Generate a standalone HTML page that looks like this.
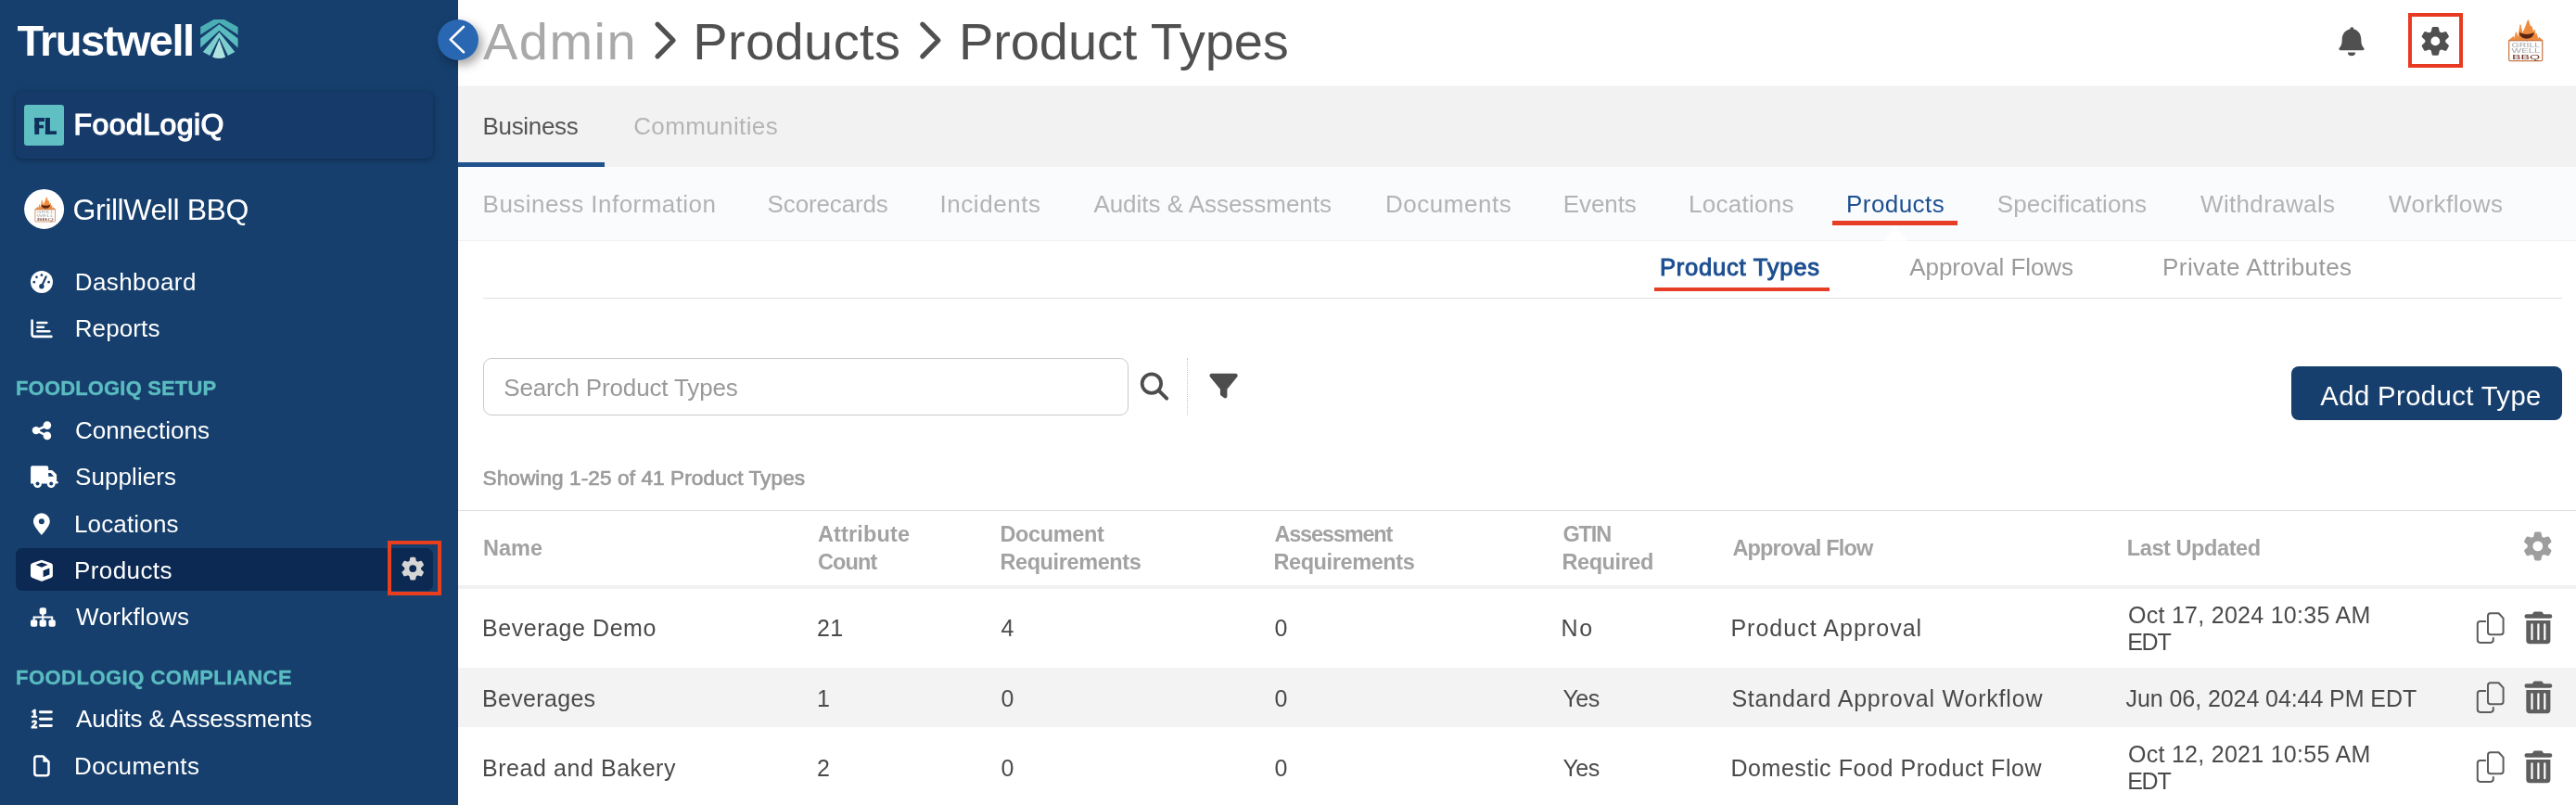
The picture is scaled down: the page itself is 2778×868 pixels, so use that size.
<!DOCTYPE html>
<html><head><meta charset="utf-8"><title>Product Types</title>
<style>
*{margin:0;padding:0;box-sizing:border-box}
html,body{width:2778px;height:868px;overflow:hidden;background:#fff}
body{font-family:"Liberation Sans",sans-serif;position:relative}
.a{position:absolute}
.t{position:absolute;white-space:nowrap;line-height:1}
svg{position:absolute;overflow:visible}
</style></head>
<body>

<!-- header bottom shadow + gray tab band -->
<div class="a" style="left:494px;top:93px;width:2284px;height:87px;background:#f2f2f2"></div>
<div class="a" style="left:494px;top:92px;width:2284px;height:2px;background:linear-gradient(#ffffff,#ececec)"></div>
<div class="a" style="left:494px;top:175px;width:158px;height:5px;background:#20528e"></div>
<!-- subnav band -->
<div class="a" style="left:494px;top:180px;width:2284px;height:80px;background:#fafbfd;border-bottom:1px solid #eef0f2"></div>

<svg style="left:0;top:0" width="2778" height="300" viewBox="0 0 2778 300"><path d="M2031.3 259.8 L2044 243.2 L2056.7 259.8Z" fill="#fff"/></svg>
<div class="a" style="left:1976px;top:238.4px;width:135px;height:4.2px;background:#e63e24"></div>
<!-- third level -->
<div class="a" style="left:1784px;top:310px;width:189px;height:4px;background:#e63e24"></div>
<div class="a" style="left:521px;top:321px;width:2242px;height:1px;background:#dedfe1"></div>
<!-- search -->
<div class="a" style="left:521px;top:386px;width:696px;height:62px;border:1px solid #c9c9c9;border-radius:9px;background:#fff"></div>
<div class="a" style="left:1280px;top:386px;width:0;height:62px;border-left:1px dotted #c4c4c4"></div>
<!-- add button -->
<div class="a" style="left:2471px;top:395px;width:292px;height:58px;border-radius:8px;background:#163f6d"></div>
<!-- table -->
<div class="a" style="left:494px;top:550px;width:2284px;height:1px;background:#dddddd"></div>
<div class="a" style="left:494px;top:631px;width:2284px;height:4px;background:#f1f1f1"></div>
<div class="a" style="left:494px;top:720px;width:2284px;height:64px;background:#f3f3f3"></div>
<!-- sidebar -->
<div class="a" style="left:0;top:0;width:494px;height:868px;background:#163f6d"></div>
<div class="a" style="left:17px;top:99px;width:450px;height:72px;border-radius:7px;background:#163b6b;box-shadow:0 1px 6px rgba(0,0,0,.38)"></div>
<div class="a" style="left:26px;top:113px;width:43px;height:44px;border-radius:3px;background:#60bfc2"></div>
<div class="a" style="left:17px;top:591px;width:450px;height:46px;border-radius:7px;background:#0b2952"></div>
<div class="a" style="left:418px;top:583px;width:58px;height:59px;border:4px solid #e8401f"></div>
<div class="a" style="left:2597px;top:14px;width:59px;height:59px;border:4px solid #e83a20"></div>
<!-- collapse circle -->
<div class="a" style="left:472px;top:20.5px;width:44px;height:44px;border-radius:50%;background:#2a67b2;box-shadow:4px 5px 11px rgba(0,0,0,.36)"></div>

<svg style="left:0;top:0;will-change:transform" width="2778" height="868" viewBox="0 0 2778 868">
<g><path d="M216.2 29.1 L230.6 21 L241.8 21 L256.6 29.1 L256.6 37.5 L236.4 24.6 L216.2 37.5Z" fill="#4aaeb3"/><path d="M216.2 41.5 L236.4 26.3 L256.6 41.5 L256.6 51.5 L236.4 33.1 L216.2 51.5Z" fill="#5bbcc0"/><path d="M218.8 56.1 L236.4 34.7 L253.3 56.1 L245.9 59.9 L236.4 40.6 L226.3 59.9Z" fill="#7ccdce"/><path d="M236.4 42.8 L243.1 61.4 Q236.4 64.6 229.1 61.4Z" fill="#b0e4e1"/></g>
<g fill="#0f2f5c"><rect x="37.3" y="127" width="4.9" height="17.9"/><rect x="37.3" y="127" width="10.6" height="4.1"/><rect x="37.3" y="134.8" width="9.7" height="3.5"/><rect x="48.9" y="127" width="5" height="17.9"/><rect x="48.9" y="141.3" width="12.1" height="3.6"/></g>
<path d="M500 28.8 L485.8 42.6 L500 56.3" fill="none" stroke="#fff" stroke-width="2.6" stroke-linecap="round" stroke-linejoin="round"/>
<circle cx="47.6" cy="225.4" r="21.5" fill="#fff"/>
<g transform="translate(37.5 212.9) scale(1.0)"><path d="M0.13 12.97 L3.41 10.41 L4.04 12.29 L4.97 7.55 L6.22 11.66 L7.78 2.86 L9.14 8.44 L10.49 5.83 L12.78 -0.26 L14.24 4.01 L15.07 3.91 L16.17 8.02 L16.95 5.99 L17.73 10.10 L18.20 8.59 L19.19 12.08 L19.97 10.93 L22.36 12.97Z" fill="#ee8a3c" stroke="#ee8a3c" stroke-width="0.5" stroke-linejoin="round"/><path d="M7.06 7.81 Q11.85 10.10 16.64 7.81 Q16.22 11.66 11.85 11.77 Q7.47 11.66 7.06 7.81Z" fill="#5a2415"/><path d="M12.11 11.87 L12.11 13.75" stroke="#9a9a9a" stroke-width="0.5"/><rect x="0.4" y="12.9" width="21.6" height="13.2" rx="0.7" fill="none" stroke="#c77a4a" stroke-width="0.75"/><rect x="0.8" y="13.3" width="20.8" height="12.4" fill="#fff" opacity="0"/><text x="2.1" y="17.5" font-family="Liberation Sans" font-size="3.9" textLength="18.4" lengthAdjust="spacingAndGlyphs" fill="#a3a3a3">GRILL</text><text x="2.1" y="21" font-family="Liberation Sans" font-size="3.9" textLength="18.4" lengthAdjust="spacingAndGlyphs" fill="#a3a3a3">WELL</text><text x="2.4" y="24.9" font-family="Liberation Sans" font-size="4.1" textLength="18" lengthAdjust="spacingAndGlyphs" fill="#6a2c1f">BBQ</text></g>
<g transform="translate(2705 22) scale(1.67)"><path d="M0.13 12.97 L3.41 10.41 L4.04 12.29 L4.97 7.55 L6.22 11.66 L7.78 2.86 L9.14 8.44 L10.49 5.83 L12.78 -0.26 L14.24 4.01 L15.07 3.91 L16.17 8.02 L16.95 5.99 L17.73 10.10 L18.20 8.59 L19.19 12.08 L19.97 10.93 L22.36 12.97Z" fill="#ee8a3c" stroke="#ee8a3c" stroke-width="0.5" stroke-linejoin="round"/><path d="M7.06 7.81 Q11.85 10.10 16.64 7.81 Q16.22 11.66 11.85 11.77 Q7.47 11.66 7.06 7.81Z" fill="#5a2415"/><path d="M12.11 11.87 L12.11 13.75" stroke="#9a9a9a" stroke-width="0.5"/><rect x="0.4" y="12.9" width="21.6" height="13.2" rx="0.7" fill="none" stroke="#c77a4a" stroke-width="0.75"/><rect x="0.8" y="13.3" width="20.8" height="12.4" fill="#fff" opacity="0"/><text x="2.1" y="17.5" font-family="Liberation Sans" font-size="3.9" textLength="18.4" lengthAdjust="spacingAndGlyphs" fill="#a3a3a3">GRILL</text><text x="2.1" y="21" font-family="Liberation Sans" font-size="3.9" textLength="18.4" lengthAdjust="spacingAndGlyphs" fill="#a3a3a3">WELL</text><text x="2.4" y="24.9" font-family="Liberation Sans" font-size="4.1" textLength="18" lengthAdjust="spacingAndGlyphs" fill="#6a2c1f">BBQ</text></g>
<circle cx="45" cy="304.1" r="12" fill="#fff"/>
<circle cx="36.8" cy="304.2" r="1.35" fill="#163f6d"/>
<circle cx="39.5" cy="298.8" r="1.35" fill="#163f6d"/>
<circle cx="44.9" cy="296.7" r="1.35" fill="#163f6d"/>
<circle cx="52.6" cy="304.2" r="1.35" fill="#163f6d"/>
<path d="M44.9 308.6 L49.7 298.4" stroke="#163f6d" stroke-width="2.2" stroke-linecap="round"/>
<circle cx="44.9" cy="308.7" r="2.7" fill="#163f6d"/>
<path d="M34.6 345.5 L34.6 360.4 Q34.6 362.9 37.1 362.9 L55.4 362.9" fill="none" stroke="#fff" stroke-width="2.6" stroke-linecap="round" stroke-linejoin="round"/>
<path d="M40.4 348.1 L50.3 348.1" stroke="#fff" stroke-width="2.5" stroke-linecap="round"/>
<path d="M40.4 352.7 L46.9 352.7" stroke="#fff" stroke-width="2.5" stroke-linecap="round"/>
<path d="M40.4 357.3 L53.3 357.3" stroke="#fff" stroke-width="2.5" stroke-linecap="round"/>
<path d="M50.8 458.7 L38.9 464.1 L50.8 469.8" fill="none" stroke="#fff" stroke-width="2.6" stroke-linejoin="round"/>
<circle cx="38.9" cy="464.1" r="4.2" fill="#fff"/><circle cx="50.9" cy="458.6" r="4.3" fill="#fff"/><circle cx="50.9" cy="469.9" r="4.3" fill="#fff"/>
<path d="M34.9 502.3 L50.4 502.3 Q52.2 502.3 52.2 504.1 L52.2 507 L55.8 507 Q56.4 507 56.8 507.4 L60.7 511.3 Q61.1 511.7 61.1 512.3 L61.1 518.9 L61.7 518.9 Q62.8 518.9 62.8 520.2 Q62.8 521.6 61.7 521.6 L33.1 521.6 L33.1 504.1 Q33.1 502.3 34.9 502.3Z" fill="#fff"/>
<path d="M52.2 510.1 L54.8 510.1 L58 513.7 L52.2 513.8Z" fill="#163f6d"/>
<circle cx="40.5" cy="521.5" r="4.5" fill="#fff"/><circle cx="40.5" cy="521.5" r="2" fill="#163f6d"/>
<circle cx="55.2" cy="521.5" r="4.5" fill="#fff"/><circle cx="55.2" cy="521.5" r="2" fill="#163f6d"/>
<path d="M44.85 577 C43.6 575.4 35.9 567.2 35.9 562.3 A8.95 8.95 0 0 1 53.8 562.3 C53.8 567.2 46.1 575.4 44.85 577Z" fill="#fff"/>
<circle cx="44.85" cy="562.3" r="3" fill="#163f6d"/>
<path d="M44.9 603.7 L55.2 607.3 Q56.9 607.9 56.9 609.7 L56.9 620.6 Q56.9 622.4 55.2 623.1 L46 626.5 Q44.9 626.9 43.8 626.5 L34.7 623.1 Q33 622.4 33 620.6 L33 609.7 Q33 607.9 34.7 607.3Z" fill="#fff"/>
<path d="M38.4 609.1 L44.9 606.6 L51.6 609.1 L44.9 611.7Z" fill="#0b2952"/>
<path d="M46.6 615.2 L53.4 612.6 L53.4 619.6 L46.6 622.3Z" fill="#0b2952"/>
<path d="M36.6 668.6 L36.6 665.6 L56.2 665.6 L56.2 668.6 M46.2 662 L46.2 668.6" fill="none" stroke="#fff" stroke-width="2"/>
<rect x="42.6" y="655.2" width="7.3" height="7.4" rx="2" fill="#fff"/>
<rect x="33" y="668.3" width="7.3" height="7.4" rx="2" fill="#fff"/>
<rect x="42.6" y="668.3" width="7.3" height="7.4" rx="2" fill="#fff"/>
<rect x="52.5" y="668.3" width="7.3" height="7.4" rx="2" fill="#fff"/>
<path d="M43.35 767.8 L55.35 767.8" stroke="#fff" stroke-width="2.9" stroke-linecap="round"/>
<path d="M43.35 775.2 L55.35 775.2" stroke="#fff" stroke-width="2.9" stroke-linecap="round"/>
<path d="M43.35 782.5 L55.35 782.5" stroke="#fff" stroke-width="2.9" stroke-linecap="round"/>
<path d="M34.1 767.3 L36.5 764.9 L38.6 764.9 L38.6 771.9 L40 771.9 L40 773.7 L34 773.7 L34 771.9 L36 771.9 L36 767.6 L34.9 768.6Z" fill="#fff" stroke="#fff" stroke-width="0.4" stroke-linejoin="round"/>
<path d="M34 778.7 Q34.7 776.6 37 776.6 Q39.9 776.6 39.9 779.1 Q39.9 780.6 37.9 782.2 L36.8 783.3 L40 783.3 L40 785.3 L33.8 785.3 L33.8 783.6 L36.5 781 Q37.6 780.1 37.6 779.3 Q37.6 778.5 36.8 778.5 Q36 778.5 35.7 779.6Z" fill="#fff" stroke="#fff" stroke-width="0.4" stroke-linejoin="round"/>
<path d="M39.9 815.6 L46.6 815.6 L52.5 821.5 L52.5 833.6 Q52.5 836.3 49.8 836.3 L39.9 836.3 Q37.3 836.3 37.3 833.6 L37.3 818.3 Q37.3 815.6 39.9 815.6Z" fill="none" stroke="#fff" stroke-width="2.5" stroke-linejoin="round"/>
<path d="M46.4 815 L53.2 821.8 L46.4 821.8Z" fill="#fff"/>
<path d="M442.78 605.61 L443.55 602.07 L446.85 602.07 L447.62 605.61 L448.94 606.61 L450.48 607.26 L453.93 606.15 L455.58 609.01 L452.89 611.45 L452.69 613.10 L452.89 614.75 L455.58 617.19 L453.93 620.05 L450.48 618.94 L448.94 619.59 L447.62 620.59 L446.85 624.13 L443.55 624.13 L442.78 620.59 L441.46 619.59 L439.92 618.94 L436.47 620.05 L434.82 617.19 L437.51 614.75 L437.71 613.10 L437.51 611.45 L434.82 609.01 L436.47 606.15 L439.92 607.26 L441.46 606.61Z" fill="#d6d6d6" stroke="#d6d6d6" stroke-width="2.74" stroke-linejoin="round"/><circle cx="445.2" cy="613.1" r="3.9" fill="#0b2952"/>
<path d="M2623.30 35.10 L2624.25 30.70 L2628.35 30.70 L2629.30 35.10 L2630.95 36.35 L2632.85 37.15 L2637.14 35.77 L2639.19 39.33 L2635.85 42.35 L2635.60 44.40 L2635.85 46.45 L2639.19 49.47 L2637.14 53.03 L2632.85 51.65 L2630.95 52.45 L2629.30 53.70 L2628.35 58.10 L2624.25 58.10 L2623.30 53.70 L2621.65 52.45 L2619.75 51.65 L2615.46 53.03 L2613.41 49.47 L2616.75 46.45 L2617.00 44.40 L2616.75 42.35 L2613.41 39.33 L2615.46 35.77 L2619.75 37.15 L2621.65 36.35Z" fill="#505050" stroke="#505050" stroke-width="3.40" stroke-linejoin="round"/><circle cx="2626.3" cy="44.4" r="4.9" fill="#ffffff"/>
<path d="M2733.78 579.54 L2734.74 575.11 L2738.86 575.11 L2739.82 579.54 L2741.48 580.79 L2743.40 581.60 L2747.71 580.22 L2749.77 583.79 L2746.42 586.83 L2746.16 588.90 L2746.42 590.97 L2749.77 594.01 L2747.71 597.58 L2743.40 596.20 L2741.48 597.01 L2739.82 598.26 L2738.86 602.69 L2734.74 602.69 L2733.78 598.26 L2732.12 597.01 L2730.20 596.20 L2725.89 597.58 L2723.83 594.01 L2727.18 590.97 L2727.44 588.90 L2727.18 586.83 L2723.83 583.79 L2725.89 580.22 L2730.20 581.60 L2732.12 580.79Z" fill="#9e9e9e" stroke="#9e9e9e" stroke-width="3.42" stroke-linejoin="round"/><circle cx="2736.8" cy="588.9" r="5.4" fill="#ffffff"/>
<path d="M2534.2 31.4 a2.1 2.1 0 0 1 4.2 0 C2543.2 32.4 2546.3 37 2546.3 42.5 C2546.3 47.5 2547.5 50 2549.2 51.7 C2550 52.7 2549.6 54.3 2548.1 54.3 L2523.9 54.3 C2522.4 54.3 2522 52.7 2522.8 51.7 C2524.5 50 2525.7 47.5 2525.7 42.5 C2525.7 37 2528.8 32.4 2534.2 31.4Z" fill="#505050"/>
<path d="M2531.9 56.4 L2540.1 56.4 A4.1 3.8 0 0 1 2531.9 56.4Z" fill="#505050"/>
<path d="M709.0 26.2 L726.1 43.5 L709.0 60.8" fill="none" stroke="#505050" stroke-width="5.2" stroke-linecap="round" stroke-linejoin="round"/>
<path d="M994.8 26.2 L1011.9 43.5 L994.8 60.8" fill="none" stroke="#505050" stroke-width="5.2" stroke-linecap="round" stroke-linejoin="round"/>
<circle cx="1241.9" cy="413.6" r="10.25" fill="none" stroke="#4d4d4d" stroke-width="3.7"/>
<path d="M1249.6 421.2 L1258.2 429.6" stroke="#4d4d4d" stroke-width="3.9" stroke-linecap="round"/>
<path d="M1306.5 404.9 L1332.6 404.9 L1321.3 418.9 L1321.3 427.3 L1318 424.9 L1318 418.9Z" fill="#4d4d4d" stroke="#4d4d4d" stroke-width="4.2" stroke-linejoin="round"/>
<g transform="translate(0 0)"><path d="M2680.2 670 L2674.6 670 Q2671.8 670 2671.8 672.8 L2671.8 690.1 Q2671.8 692.9 2674.6 692.9 L2686 692.9 Q2688.8 692.9 2688.8 690.1 L2688.8 688" fill="none" stroke="#5c5c5c" stroke-width="2" stroke-linecap="round"/><path d="M2685.8 661.3 L2694.6 661.3 L2699.6 666.6 L2699.6 681.5 Q2699.6 684.3 2696.8 684.3 L2685.8 684.3 Q2683 684.3 2683 681.5 L2683 664.1 Q2683 661.3 2685.8 661.3Z" fill="none" stroke="#5c5c5c" stroke-width="2" stroke-linejoin="round"/><rect x="2722.5" y="662.2" width="29.8" height="4.5" rx="2.2" fill="#5e5e5e"/><path d="M2730.4 663 L2732 660.4 Q2732.5 659.6 2733.5 659.6 L2740.5 659.6 Q2741.5 659.6 2742 660.4 L2743.6 663Z" fill="#5e5e5e"/><path d="M2724.3 668.9 L2750.4 668.9 L2750.4 690.6 Q2750.4 694.2 2746.8 694.2 L2727.9 694.2 Q2724.3 694.2 2724.3 690.6Z" fill="#5e5e5e"/><path d="M2730.5 673.4 L2730.5 689.2" stroke="#fff" stroke-width="2.2" stroke-linecap="round"/><path d="M2737.4 673.4 L2737.4 689.2" stroke="#fff" stroke-width="2.2" stroke-linecap="round"/><path d="M2744.3 673.4 L2744.3 689.2" stroke="#fff" stroke-width="2.2" stroke-linecap="round"/></g>
<g transform="translate(0 75)"><path d="M2680.2 670 L2674.6 670 Q2671.8 670 2671.8 672.8 L2671.8 690.1 Q2671.8 692.9 2674.6 692.9 L2686 692.9 Q2688.8 692.9 2688.8 690.1 L2688.8 688" fill="none" stroke="#5c5c5c" stroke-width="2" stroke-linecap="round"/><path d="M2685.8 661.3 L2694.6 661.3 L2699.6 666.6 L2699.6 681.5 Q2699.6 684.3 2696.8 684.3 L2685.8 684.3 Q2683 684.3 2683 681.5 L2683 664.1 Q2683 661.3 2685.8 661.3Z" fill="none" stroke="#5c5c5c" stroke-width="2" stroke-linejoin="round"/><rect x="2722.5" y="662.2" width="29.8" height="4.5" rx="2.2" fill="#5e5e5e"/><path d="M2730.4 663 L2732 660.4 Q2732.5 659.6 2733.5 659.6 L2740.5 659.6 Q2741.5 659.6 2742 660.4 L2743.6 663Z" fill="#5e5e5e"/><path d="M2724.3 668.9 L2750.4 668.9 L2750.4 690.6 Q2750.4 694.2 2746.8 694.2 L2727.9 694.2 Q2724.3 694.2 2724.3 690.6Z" fill="#5e5e5e"/><path d="M2730.5 673.4 L2730.5 689.2" stroke="#fff" stroke-width="2.2" stroke-linecap="round"/><path d="M2737.4 673.4 L2737.4 689.2" stroke="#fff" stroke-width="2.2" stroke-linecap="round"/><path d="M2744.3 673.4 L2744.3 689.2" stroke="#fff" stroke-width="2.2" stroke-linecap="round"/></g>
<g transform="translate(0 150)"><path d="M2680.2 670 L2674.6 670 Q2671.8 670 2671.8 672.8 L2671.8 690.1 Q2671.8 692.9 2674.6 692.9 L2686 692.9 Q2688.8 692.9 2688.8 690.1 L2688.8 688" fill="none" stroke="#5c5c5c" stroke-width="2" stroke-linecap="round"/><path d="M2685.8 661.3 L2694.6 661.3 L2699.6 666.6 L2699.6 681.5 Q2699.6 684.3 2696.8 684.3 L2685.8 684.3 Q2683 684.3 2683 681.5 L2683 664.1 Q2683 661.3 2685.8 661.3Z" fill="none" stroke="#5c5c5c" stroke-width="2" stroke-linejoin="round"/><rect x="2722.5" y="662.2" width="29.8" height="4.5" rx="2.2" fill="#5e5e5e"/><path d="M2730.4 663 L2732 660.4 Q2732.5 659.6 2733.5 659.6 L2740.5 659.6 Q2741.5 659.6 2742 660.4 L2743.6 663Z" fill="#5e5e5e"/><path d="M2724.3 668.9 L2750.4 668.9 L2750.4 690.6 Q2750.4 694.2 2746.8 694.2 L2727.9 694.2 Q2724.3 694.2 2724.3 690.6Z" fill="#5e5e5e"/><path d="M2730.5 673.4 L2730.5 689.2" stroke="#fff" stroke-width="2.2" stroke-linecap="round"/><path d="M2737.4 673.4 L2737.4 689.2" stroke="#fff" stroke-width="2.2" stroke-linecap="round"/><path d="M2744.3 673.4 L2744.3 689.2" stroke="#fff" stroke-width="2.2" stroke-linecap="round"/></g>
</svg>
<div id="txt" style="position:absolute;left:0;top:0;width:2778px;height:868px;will-change:transform">
<span class="t" style="left:18.40px;top:19.81px;font-size:47px;font-weight:700;color:#ffffff;letter-spacing:-1.508px;">Trustwell</span>
<span class="t" style="left:79.50px;top:117.91px;font-size:32px;color:#ffffff;letter-spacing:0.445px;-webkit-text-stroke:1.25px #fff">FoodLogiQ</span>
<span class="t" style="left:78.50px;top:209.91px;font-size:32px;color:#ffffff;letter-spacing:-0.424px;">GrillWell BBQ</span>
<span class="t" style="left:80.70px;top:290.99px;font-size:26px;color:#ffffff;letter-spacing:0.433px;">Dashboard</span>
<span class="t" style="left:80.70px;top:340.99px;font-size:26px;color:#ffffff;letter-spacing:0.110px;">Reports</span>
<span class="t" style="left:17.00px;top:408.13px;font-size:22px;font-weight:700;color:#5bbcc0;letter-spacing:0.163px;-webkit-text-stroke:0.35px #5bbcc0">FOODLOGIQ SETUP</span>
<span class="t" style="left:81.00px;top:450.99px;font-size:26px;color:#ffffff;letter-spacing:0.046px;">Connections</span>
<span class="t" style="left:81.00px;top:500.99px;font-size:26px;color:#ffffff;letter-spacing:0.076px;">Suppliers</span>
<span class="t" style="left:80.00px;top:551.74px;font-size:26px;color:#ffffff;letter-spacing:0.150px;">Locations</span>
<span class="t" style="left:80.00px;top:601.74px;font-size:26px;color:#ffffff;letter-spacing:0.414px;">Products</span>
<span class="t" style="left:82.00px;top:651.74px;font-size:26px;color:#ffffff;letter-spacing:0.322px;">Workflows</span>
<span class="t" style="left:17.00px;top:720.38px;font-size:22px;font-weight:700;color:#5bbcc0;letter-spacing:0.486px;-webkit-text-stroke:0.35px #5bbcc0">FOODLOGIQ COMPLIANCE</span>
<span class="t" style="left:82.00px;top:761.74px;font-size:26px;color:#ffffff;letter-spacing:-0.140px;">Audits &amp; Assessments</span>
<span class="t" style="left:80.00px;top:812.99px;font-size:26px;color:#ffffff;letter-spacing:0.438px;">Documents</span>
<span class="t" style="left:521.00px;top:16.60px;font-size:56px;color:#a9a9a9;letter-spacing:1.479px;">Admin</span>
<span class="t" style="left:747.20px;top:16.60px;font-size:56px;color:#505050;letter-spacing:0.401px;">Products</span>
<span class="t" style="left:1034.00px;top:16.60px;font-size:56px;color:#505050;letter-spacing:-0.101px;">Product Types</span>
<span class="t" style="left:520.50px;top:122.99px;font-size:26px;color:#555555;letter-spacing:-0.314px;">Business</span>
<span class="t" style="left:683.20px;top:122.99px;font-size:26px;color:#b5b5b5;letter-spacing:0.379px;">Communities</span>
<span class="t" style="left:520.60px;top:207.39px;font-size:26px;color:#b3b3b3;letter-spacing:0.451px;">Business Information</span>
<span class="t" style="left:827.60px;top:207.39px;font-size:26px;color:#b3b3b3;letter-spacing:-0.144px;">Scorecards</span>
<span class="t" style="left:1013.50px;top:207.39px;font-size:26px;color:#b3b3b3;letter-spacing:0.555px;">Incidents</span>
<span class="t" style="left:1179.40px;top:207.39px;font-size:26px;color:#b3b3b3;letter-spacing:-0.034px;">Audits &amp; Assessments</span>
<span class="t" style="left:1494.00px;top:207.39px;font-size:26px;color:#b3b3b3;letter-spacing:0.525px;">Documents</span>
<span class="t" style="left:1685.80px;top:207.39px;font-size:26px;color:#b3b3b3;letter-spacing:-0.097px;">Events</span>
<span class="t" style="left:1820.90px;top:207.39px;font-size:26px;color:#b3b3b3;letter-spacing:0.300px;">Locations</span>
<span class="t" style="left:2153.80px;top:207.39px;font-size:26px;color:#b3b3b3;letter-spacing:0.060px;">Specifications</span>
<span class="t" style="left:2373.00px;top:207.39px;font-size:26px;color:#b3b3b3;letter-spacing:0.341px;">Withdrawals</span>
<span class="t" style="left:2576.00px;top:207.39px;font-size:26px;color:#b3b3b3;letter-spacing:0.447px;">Workflows</span>
<span class="t" style="left:1991.00px;top:207.39px;font-size:26px;color:#1d4f91;letter-spacing:0.442px;">Products</span>
<span class="t" style="left:1790.00px;top:276.33px;font-size:25.6px;color:#1d4f91;letter-spacing:0.733px;-webkit-text-stroke:1px #1d4f91">Product Types</span>
<span class="t" style="left:2059.30px;top:275.39px;font-size:26px;color:#9b9b9b;letter-spacing:-0.080px;">Approval Flows</span>
<span class="t" style="left:2332.00px;top:275.39px;font-size:26px;color:#9b9b9b;letter-spacing:0.443px;">Private Attributes</span>
<span class="t" style="left:543.20px;top:404.99px;font-size:26px;color:#999999;letter-spacing:-0.142px;">Search Product Types</span>
<span class="t" style="left:520.50px;top:505.07px;font-size:22.6px;color:#9b9b9b;letter-spacing:0.084px;-webkit-text-stroke:0.7px #9b9b9b">Showing 1-25 of 41 Product Types</span>
<span class="t" style="left:2502.30px;top:412.40px;font-size:29.3px;color:#ffffff;letter-spacing:0.380px;">Add Product Type</span>
<span class="t" style="left:521.00px;top:580.31px;font-size:23.5px;font-weight:700;color:#a2a2a2;letter-spacing:0.021px;">Name</span>
<span class="t" style="left:882.00px;top:564.61px;font-size:23.5px;font-weight:700;color:#a2a2a2;letter-spacing:0.146px;">Attribute</span>
<span class="t" style="left:882.00px;top:595.21px;font-size:23.5px;font-weight:700;color:#a2a2a2;letter-spacing:-0.859px;">Count</span>
<span class="t" style="left:1078.40px;top:564.61px;font-size:23.5px;font-weight:700;color:#a2a2a2;letter-spacing:-0.353px;">Document</span>
<span class="t" style="left:1078.40px;top:595.21px;font-size:23.5px;font-weight:700;color:#a2a2a2;letter-spacing:-0.394px;">Requirements</span>
<span class="t" style="left:1374.40px;top:564.61px;font-size:23.5px;font-weight:700;color:#a2a2a2;letter-spacing:-1.175px;">Assessment</span>
<span class="t" style="left:1373.40px;top:595.21px;font-size:23.5px;font-weight:700;color:#a2a2a2;letter-spacing:-0.394px;">Requirements</span>
<span class="t" style="left:1685.50px;top:564.61px;font-size:23.5px;font-weight:700;color:#a2a2a2;letter-spacing:-1.175px;">GTIN</span>
<span class="t" style="left:1684.50px;top:595.21px;font-size:23.5px;font-weight:700;color:#a2a2a2;letter-spacing:-0.428px;">Required</span>
<span class="t" style="left:1868.40px;top:580.31px;font-size:23.5px;font-weight:700;color:#a2a2a2;letter-spacing:-0.835px;">Approval Flow</span>
<span class="t" style="left:2293.80px;top:580.31px;font-size:23.5px;font-weight:700;color:#a2a2a2;letter-spacing:-0.418px;">Last Updated</span>
<span class="t" style="left:520.00px;top:665.24px;font-size:25px;color:#4a4a4a;letter-spacing:0.563px;">Beverage Demo</span>
<span class="t" style="left:881.00px;top:665.24px;font-size:25px;color:#4a4a4a;letter-spacing:0.396px;">21</span>
<span class="t" style="left:1079.40px;top:665.24px;font-size:25px;color:#4a4a4a;letter-spacing:0.550px;">4</span>
<span class="t" style="left:1374.40px;top:665.24px;font-size:25px;color:#4a4a4a;letter-spacing:0.550px;">0</span>
<span class="t" style="left:1683.50px;top:665.24px;font-size:25px;color:#4a4a4a;letter-spacing:1.750px;">No</span>
<span class="t" style="left:1866.40px;top:665.24px;font-size:25px;color:#4a4a4a;letter-spacing:1.025px;">Product Approval</span>
<span class="t" style="left:2295.00px;top:650.84px;font-size:25px;color:#4a4a4a;letter-spacing:0.276px;">Oct 17, 2024 10:35 AM</span>
<span class="t" style="left:2294.20px;top:679.84px;font-size:25px;color:#4a4a4a;letter-spacing:-1.250px;">EDT</span>
<span class="t" style="left:520.00px;top:740.54px;font-size:25px;color:#4a4a4a;letter-spacing:0.323px;">Beverages</span>
<span class="t" style="left:881.00px;top:740.54px;font-size:25px;color:#4a4a4a;letter-spacing:0.550px;">1</span>
<span class="t" style="left:1079.40px;top:740.54px;font-size:25px;color:#4a4a4a;letter-spacing:0.550px;">0</span>
<span class="t" style="left:1374.40px;top:740.54px;font-size:25px;color:#4a4a4a;letter-spacing:0.550px;">0</span>
<span class="t" style="left:1685.50px;top:740.54px;font-size:25px;color:#4a4a4a;letter-spacing:-0.542px;">Yes</span>
<span class="t" style="left:1867.40px;top:740.54px;font-size:25px;color:#4a4a4a;letter-spacing:0.804px;">Standard Approval Workflow</span>
<span class="t" style="left:2292.60px;top:740.54px;font-size:25px;color:#4a4a4a;letter-spacing:-0.079px;">Jun 06, 2024 04:44 PM EDT</span>
<span class="t" style="left:520.00px;top:815.84px;font-size:25px;color:#4a4a4a;letter-spacing:0.559px;">Bread and Bakery</span>
<span class="t" style="left:881.00px;top:815.84px;font-size:25px;color:#4a4a4a;letter-spacing:0.550px;">2</span>
<span class="t" style="left:1079.40px;top:815.84px;font-size:25px;color:#4a4a4a;letter-spacing:0.550px;">0</span>
<span class="t" style="left:1374.40px;top:815.84px;font-size:25px;color:#4a4a4a;letter-spacing:0.550px;">0</span>
<span class="t" style="left:1685.50px;top:815.84px;font-size:25px;color:#4a4a4a;letter-spacing:-0.542px;">Yes</span>
<span class="t" style="left:1866.40px;top:815.84px;font-size:25px;color:#4a4a4a;letter-spacing:0.568px;">Domestic Food Product Flow</span>
<span class="t" style="left:2295.00px;top:800.84px;font-size:25px;color:#4a4a4a;letter-spacing:0.276px;">Oct 12, 2021 10:55 AM</span>
<span class="t" style="left:2294.20px;top:829.84px;font-size:25px;color:#4a4a4a;letter-spacing:-1.250px;">EDT</span>
</div>
</body></html>
